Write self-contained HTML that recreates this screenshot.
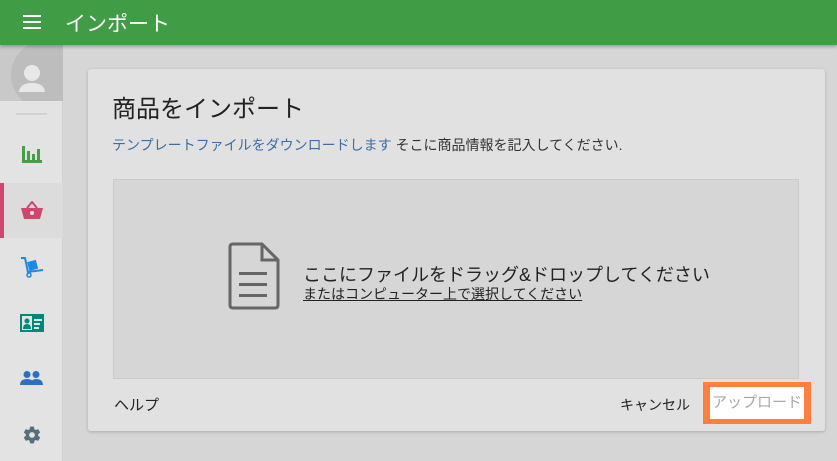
<!DOCTYPE html>
<html><head><meta charset="utf-8"><style>
*{margin:0;padding:0;box-sizing:border-box}
body{width:837px;height:461px;overflow:hidden;background:#d6d6d6;font-family:"Liberation Sans","Noto Sans CJK JP",sans-serif;position:relative}
.hdr{position:absolute;left:0;top:0;width:837px;height:45px;background:#419d45;box-shadow:0 2px 3px rgba(0,0,0,.25);z-index:3}
.hdr .t{position:absolute;left:65px;top:8px;color:#fff;font-size:21px}
.side{position:absolute;left:0;top:45px;width:63px;height:416px;background:#e3e3e3;border-right:1px solid #d0d0d0}
.av{position:absolute;left:0;top:0;width:63px;height:56px;background:#c9c9c9;overflow:hidden}
.card{position:absolute;left:88px;top:69px;width:737px;height:362px;background:#e1e1e1;border-radius:3px;box-shadow:0 1px 3px rgba(0,0,0,.2)}
.ic{position:absolute;left:0;width:63px;display:flex;justify-content:center}
</style></head><body>
<div class="hdr">
<svg style="position:absolute;left:23px;top:15px" width="18" height="14"><rect y="0" width="18" height="2" fill="#fff"/><rect y="6" width="18" height="2" fill="#fff"/><rect y="12" width="18" height="2" fill="#fff"/></svg>
<div class="t">インポート</div></div>
<div class="side">
<div class="av"><svg width="63" height="56"><circle cx="45" cy="30" r="34" fill="#bdbdbd"/><circle cx="32" cy="28" r="8" fill="#e8e8e8"/><path d="M19 47 Q20 38 32 38 Q44 38 45 47 Z" fill="#e8e8e8"/></svg></div>
<div style="position:absolute;left:16px;top:68px;width:31px;height:2px;background:#d2d2d2"></div>
<div class="ic" style="top:101px"><svg width="20" height="17"><rect x="0" y="0" width="3" height="17" fill="#43a047"/><rect x="0" y="14" width="20" height="3" fill="#43a047"/><rect x="5" y="5" width="3" height="12" fill="#43a047"/><rect x="10" y="8" width="3" height="9" fill="#43a047"/><rect x="15" y="3" width="3" height="14" fill="#43a047"/></svg></div>
<div style="position:absolute;left:0;top:138px;width:63px;height:55px;background:#dcdcdc"></div>
<div style="position:absolute;left:0;top:138px;width:4px;height:55px;background:#d0466e"></div>
<div class="ic" style="top:156px"><svg width="24" height="20"><path d="M7 7 L12 1 L17 7" stroke="#d0466e" stroke-width="2" fill="none"/><path d="M1 7 H23 L20 18 H4 Z" fill="#d0466e"/><circle cx="12" cy="12" r="2" fill="#e3e3e3"/></svg></div>
<div class="ic" style="top:211px"><svg width="24" height="22"><path d="M1 2 H5 L8 16" stroke="#1e88e5" stroke-width="2" fill="none"/><rect x="8" y="5" width="9" height="9" fill="#1e88e5" transform="rotate(-15 12 9)"/><path d="M7 16 L23 14" stroke="#1e88e5" stroke-width="2"/><circle cx="9" cy="19" r="2" fill="none" stroke="#1e88e5" stroke-width="1.5"/></svg></div>
<div class="ic" style="top:269px"><svg width="24" height="18"><rect width="24" height="18" fill="#00897b"/><rect x="2" y="2" width="10" height="14" fill="#e3e3e3"/><circle cx="7" cy="7" r="2.5" fill="#00897b"/><path d="M3 15 Q3 10 7 10 Q11 10 11 15Z" fill="#00897b"/><rect x="14" y="5" width="8" height="2" fill="#e3e3e3"/><rect x="14" y="9" width="6" height="2" fill="#e3e3e3"/><rect x="14" y="13" width="5" height="2" fill="#e3e3e3"/></svg></div>
<div class="ic" style="top:326px"><svg width="23" height="14"><circle cx="7" cy="3.5" r="3.5" fill="#2f6fbf"/><circle cx="16" cy="3.5" r="3.5" fill="#2f6fbf"/><path d="M0 14 Q0 8 7 8 Q14 8 14 14Z" fill="#2f6fbf"/><path d="M10 14 Q11 8 16 8 Q23 8 23 14Z" fill="#2f6fbf"/></svg></div>
<div class="ic" style="top:380px"><svg width="20" height="20" viewBox="0 0 24 24"><path fill="#546e7a" d="M19.4 13c.04-.3.06-.65.06-1s-.02-.7-.06-1l2.1-1.650c.2-.15.24-.42.12-.64l-2-3.46c-.12-.22-.39-.3-.61-.22l-2.490 1c-.52-.4-1.080-.73-1.690-.98l-.38-2.650A.49.49 0 0 0 14 2h-4c-.25 0-.46.18-.49.42l-.38 2.650c-.61.25-1.170.59-1.690.98l-2.490-1c-.23-.09-.49 0-.61.22l-2 3.46c-.13.22-.07.49.12.64L4.570 11c-.04.32-.07.66-.07 1s.03.68.07 1l-2.110 1.650c-.19.15-.24.42-.12.64l2 3.46c.12.22.39.3.61.22l2.490-1c.52.4 1.080.73 1.690.98l.38 2.650c.03.24.24.42.49.42h4c.25 0 .46-.18.49-.42l.38-2.650c.61-.25 1.170-.59 1.690-.98l2.490 1c.23.09.49 0 .61-.22l2-3.46c.12-.22.07-.49-.12-.64L19.4 13zM12 15.5a3.5 3.5 0 1 1 0-7 3.5 3.5 0 0 1 0 7z"/></svg></div>
</div>
<div class="card">
<div style="position:absolute;left:24px;top:20px;font-size:24px;color:#222">商品をインポート</div>
<div style="position:absolute;left:24px;top:66px;font-size:14px;color:#333"><span style="color:#3a6ea5">テンプレートファイルをダウンロードします</span> そこに商品情報を記入してください.</div>
<div style="position:absolute;left:25px;top:110px;width:686px;height:200px;background:#d6d6d6;border:1px solid #cbcbcb">
<svg style="position:absolute;left:114px;top:62px" width="52" height="68"><path d="M5 2 H34 L50 18 V63 Q50 66 47 66 H5 Q2 66 2 63 V5 Q2 2 5 2Z" fill="none" stroke="#666" stroke-width="3"/><path d="M34 2 V18 H50" fill="none" stroke="#666" stroke-width="3"/><rect x="11" y="30" width="28" height="3" fill="#666"/><rect x="11" y="41" width="28" height="3" fill="#666"/><rect x="11" y="52" width="28" height="3" fill="#666"/></svg>
<div style="position:absolute;left:189px;top:81px;font-size:18px;color:#222">ここにファイルをドラッグ&amp;ドロップしてください</div>
<div style="position:absolute;left:189px;top:104px;font-size:14px;color:#222;text-decoration:underline">またはコンピューター上で選択してください</div>
</div>
<div style="position:absolute;left:26px;top:325px;font-size:15px;color:#222">ヘルプ</div>
<div style="position:absolute;left:532px;top:326px;font-size:14px;color:#222">キャンセル</div>
<div style="position:absolute;left:615px;top:313px;width:108px;height:42px;background:#ff7f3f;padding:5px 7px">
<div style="background:#fff;height:32px;font-size:15px;color:#a8a8a8;text-align:center;line-height:32px">アップロード</div></div>
</div>
</body></html>
